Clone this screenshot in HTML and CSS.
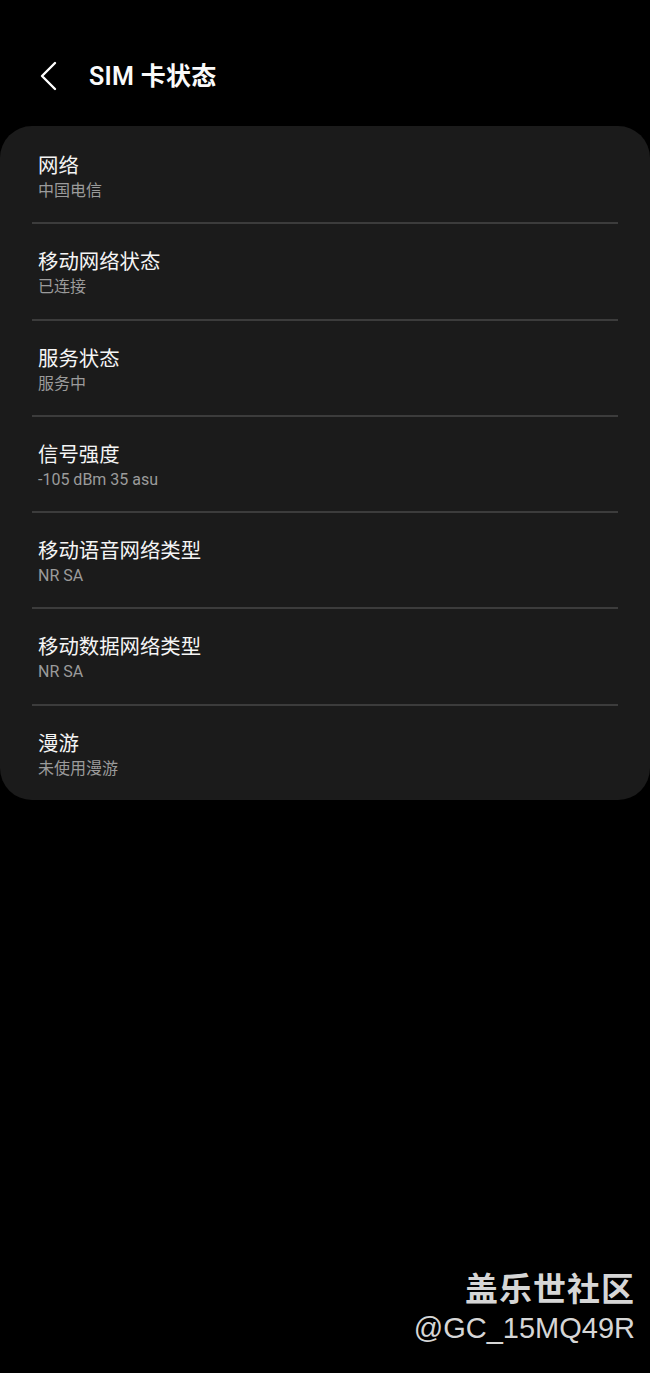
FILE: index.html
```html
<!DOCTYPE html>
<html lang="zh-CN">
<head>
    <meta charset="UTF-8">
    <meta name="viewport" content="width=device-width, initial-scale=1.0">
    <title>SIM 卡状态</title>
    <link rel="stylesheet" href="styles.css">
</head>
<body>
    <header class="top-bar">
        <svg class="back" width="20" height="30" viewBox="0 0 20 30">
            <path d="M16 2 L3 15 L16 28" fill="none" stroke="#fff" stroke-width="2.4" stroke-linecap="round" stroke-linejoin="round"/>
        </svg>
        <h1>SIM 卡状态</h1>
    </header>

    <main class="card">
        <div class="row">
            <p class="title">网络</p>
            <p class="sub">中国电信</p>
        </div>
        <div class="row">
            <p class="title">移动网络状态</p>
            <p class="sub">已连接</p>
        </div>
        <div class="row">
            <p class="title">服务状态</p>
            <p class="sub">服务中</p>
        </div>
        <div class="row">
            <p class="title">信号强度</p>
            <p class="sub">-105 dBm 35 asu</p>
        </div>
        <div class="row">
            <p class="title">移动语音网络类型</p>
            <p class="sub">NR SA</p>
        </div>
        <div class="row">
            <p class="title">移动数据网络类型</p>
            <p class="sub">NR SA</p>
        </div>
        <div class="row">
            <p class="title">漫游</p>
            <p class="sub">未使用漫游</p>
        </div>
    </main>

    <!-- Watermark -->
    <div class="watermark">
        <span class="wm-name">盖乐世社区</span>
        <span class="wm-user">@GC_15MQ49R</span>
    </div>
</body>
</html>
```

FILE: styles.css
```css
/* General Styles */
* {
    box-sizing: border-box;
}
body {
    margin: 0;
    width: 650px;
    height: 1373px;
    background: #000;
    color: #fafafa;
    font-family: Roboto, "Noto Sans CJK SC", sans-serif;
    position: relative;
    overflow: hidden;
}
p {
    margin: 0;
}
/* Header */
.top-bar {
    height: 126px;
    display: flex;
    align-items: flex-start;
    padding: 61px 0 0 39px;
}
.back {
    display: block;
}
.top-bar h1 {
    margin: 1px 0 0 30px;
    font-size: 25px;
    line-height: 30px;
    font-weight: 600;
    letter-spacing: 0.3px;
}
/* Card */
.card {
    background: #1b1b1b;
    border-radius: 32px;
    padding: 2px 32px 0;
}
.row {
    height: 96.3px;
    padding: 26px 0 0 6px;
    border-bottom: 2px solid #3c3c3c;
}
.row:last-child {
    height: 94px;
    border-bottom: none;
}
.title {
    font-size: 20.4px;
    line-height: 24px;
    color: #f5f5f5;
}
.sub {
    margin-top: 2px;
    font-size: 16px;
    line-height: 21px;
    color: #9b9b9b;
}
/* Watermark */
.watermark {
    position: absolute;
    right: 15px;
    top: 1269px;
    display: flex;
    flex-direction: column;
    align-items: flex-end;
    color: #d6d6d6;
}
.wm-name {
    font-size: 33px;
    line-height: 42px;
    font-weight: 700;
    letter-spacing: 1px;
}
.wm-user {
    font-size: 29px;
    line-height: 34px;
    font-family: "Liberation Sans", sans-serif;
}
```
